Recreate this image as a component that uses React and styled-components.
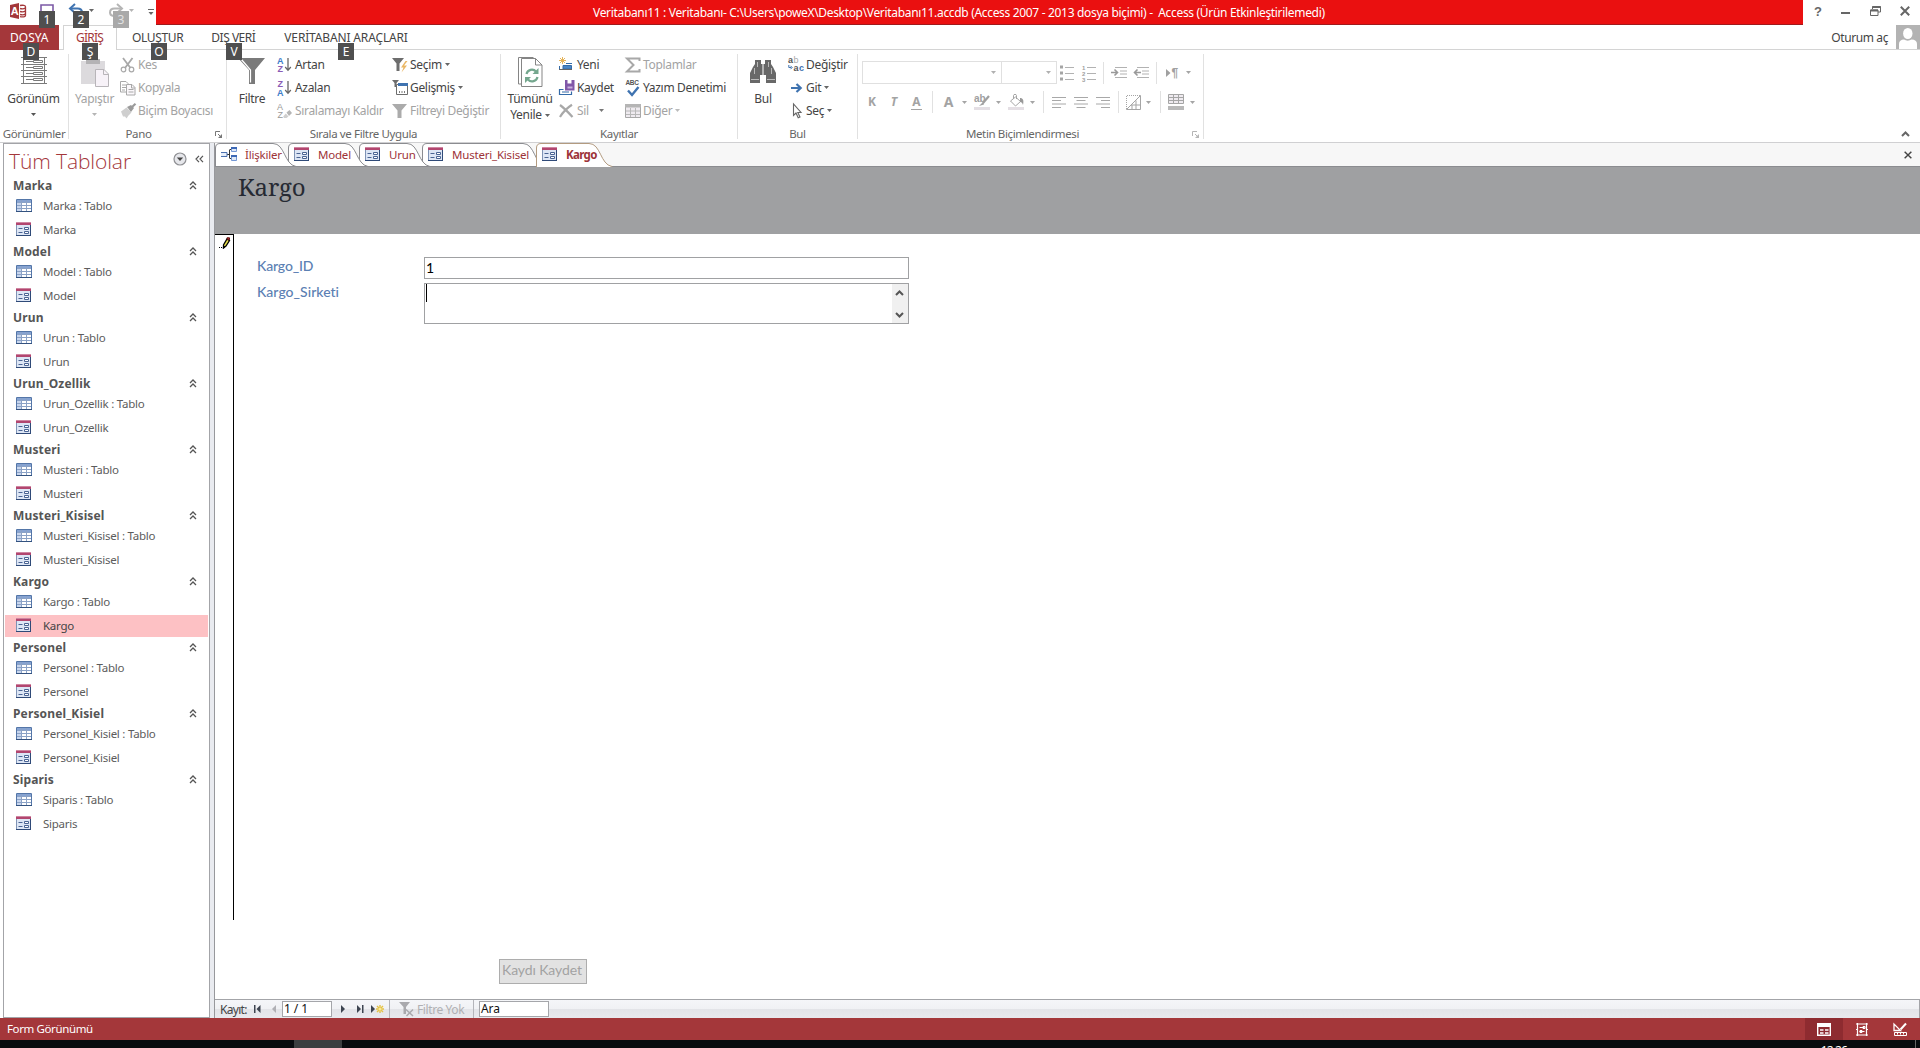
import React from "react";
import styled, { createGlobalStyle, css } from "styled-components";

const GlobalStyle = createGlobalStyle`
    * {
        box-sizing: border-box;
    }
    body {
        margin: 0;
        overflow: hidden;
        background: #fff;
        color: #444;
        font-family: "Noto Sans", "Open Sans", sans-serif;
        font-size: 12px;
    }
    svg {
        display: block;
        flex: none;
        overflow: visible;
    }
`;

const Window = styled.div`
    width: 1920px;
    height: 1048px;
    display: flex;
    flex-direction: column;
    overflow: hidden;
`;

/* ---------- title bar ---------- */

const TitleBar = styled.div`
    display: flex;
    height: 25px;
    flex: none;
`;

const QuickAccess = styled.div`
    position: relative;
    display: flex;
    align-items: flex-start;
    width: 156px;
    padding: 3px 0 0 10px;
`;

const QuickItem = styled.div`
    margin-left: ${({ $gap }) => $gap || 0}px;
    padding-top: ${({ $drop }) => $drop || 0}px;
`;

const Caption = styled.div`
    width: 1647px;
    padding-left: 437px;
    background: #ea1010;
    border-bottom: 1px solid #a01a1c;
    color: #fff;
    line-height: 25px;
    letter-spacing: -0.325px;
    white-space: pre;
`;

const WindowButtons = styled.div`
    display: flex;
    align-items: center;
    flex: 1;
    padding: 0 10px 3px 11px;
    justify-content: space-between;
`;

const KeyTip = styled.span`
    position: absolute;
    z-index: 5;
    left: ${({ $x }) => $x}px;
    top: ${({ $y }) => $y}px;
    width: 16px;
    height: 17px;
    background: ${({ $dim }) => ($dim ? "#a9a9a9" : "#4f4f4f")};
    color: ${({ $dim }) => ($dim ? "#e2e2e2" : "#fff")};
    line-height: 17px;
    text-align: center;
`;

/* ---------- ribbon tabs ---------- */

const TabBar = styled.div`
    position: relative;
    display: flex;
    flex: none;
    height: 25px;
    border-bottom: 1px solid #d4d4d4;
`;

const FileTab = styled.div`
    width: 59px;
    height: 25px;
    background: #a4373a;
    color: #fff;
    line-height: 26px;
    padding-left: 10px;
`;

const RibbonTab = styled.div`
    height: 25px;
    line-height: 26px;
    margin-left: ${({ $gap }) => $gap}px;
    letter-spacing: ${({ $ls }) => $ls}px;
    ${({ $active }) => $active && css`
        width: 54px;
        padding-left: 12px;
        background: #fff;
        border: 1px solid #d4d4d4;
        border-bottom: 0;
        line-height: 24px;
        color: #a4373a;
    `}
`;

const SignIn = styled.div`
    display: flex;
    margin-left: auto;
    line-height: 25px;
    gap: 8px;
    letter-spacing: -0.4px;
`;

/* ---------- ribbon ---------- */

const RibbonBox = styled.div`
    display: flex;
    flex: none;
    height: 93px;
    padding-top: 4px;
    border-bottom: 1px solid #d0d0d2;
`;

const Group = styled.div`
    position: relative;
    width: ${({ $w }) => $w}px;
    height: 85px;
    border-right: 1px solid #e1e1e1;
`;

const GroupBody = styled.div`
    display: flex;
    height: 70px;
    padding-left: ${({ $pad }) => $pad || 0}px;
`;

const GroupName = styled.div`
    color: #666;
    font-size: 11.5px;
    line-height: 20px;
    letter-spacing: -0.37px;
    text-align: center;
    padding-right: ${({ $shift }) => $shift || 0}px;
    white-space: nowrap;
`;

const Launcher = styled.div`
    position: absolute;
    right: 4px;
    bottom: 1px;
`;

const BigButtonBox = styled.div`
    display: flex;
    flex-direction: column;
    align-items: center;
    width: ${({ $w }) => $w}px;
    padding-top: 3px;
    color: ${({ $dim }) => ($dim ? "#a3a3a3" : "#444")};
    line-height: 16px;
    letter-spacing: -0.3px;
    white-space: nowrap;
`;

const BigIcon = styled.div`
    height: 34px;
`;

const BigArrow = styled.div`
    padding-top: 6px;
`;

const LabelRow = styled.div`
    display: flex;
    align-items: center;
    gap: 3px;
`;

const Column = styled.div`
    width: ${({ $w }) => $w}px;
    flex: none;
`;

const CommandBox = styled.div`
    display: flex;
    align-items: center;
    height: 23px;
    padding-bottom: 2px;
    color: ${({ $dim }) => ($dim ? "#a3a3a3" : "#444")};
    letter-spacing: -0.32px;
    white-space: nowrap;
`;

const CommandIcon = styled.div`
    width: 18px;
`;

const CommandArrow = styled.div`
    padding-left: ${({ $gap }) => $gap || 3}px;
`;

const FormatArea = styled.div`
    padding: 7px 0 0 4px;
`;

const FormatRow = styled.div`
    display: flex;
    align-items: center;
    height: ${({ $h }) => $h}px;
    margin-top: ${({ $top }) => $top || 0}px;
`;

const FontBox = styled.div`
    display: flex;
    align-items: center;
    justify-content: flex-end;
    width: ${({ $w }) => $w}px;
    height: 23px;
    margin-right: -1px;
    padding-right: 5px;
    border: 1px solid #e0e0e0;
`;

const Tool = styled.div`
    display: flex;
    justify-content: center;
    width: ${({ $w }) => $w}px;
    margin-left: ${({ $gap }) => $gap}px;
`;

const ToolLetter = styled(Tool)`
    color: #a3a3a3;
    font-weight: bold;
    line-height: 14px;
    font-size: ${({ $size }) => $size || 12}px;
    font-style: ${({ $italic }) => ($italic ? "italic" : "normal")};
    border-bottom: ${({ $under }) => ($under ? "1px solid #a3a3a3" : "0")};
`;

const ToolLine = styled.div`
    width: 1px;
    height: 22px;
    background: #e1e1e1;
    margin-left: ${({ $gap }) => $gap}px;
`;

const CollapseSpot = styled.div`
    margin: auto 10px 5px auto;
`;

/* ---------- navigation pane ---------- */

const Workspace = styled.div`
    display: flex;
    height: 875px;
    flex: none;
    padding-left: 3px;
`;

const NavPane = styled.div`
    width: 207px;
    height: 875px;
    border: 1px solid #a3a4a8;
    background: #fff;
`;

const NavHeader = styled.div`
    display: flex;
    align-items: center;
    height: 30px;
    padding: 0 5px 0 5px;
`;

const NavTitle = styled.div`
    width: 164px;
    padding-top: 4px;
    color: #a4373a;
    font-family: "Open Sans", "Noto Sans", sans-serif;
    font-size: 21px;
    font-weight: 300;
    line-height: 28px;
    letter-spacing: -0.1px;
    white-space: nowrap;
`;

const NavDouble = styled.div`
    margin-left: auto;
`;

const NavGroup = styled.div`
    height: 66px;
    padding-left: 1px;
`;

const NavGroupTitle = styled.div`
    display: flex;
    align-items: center;
    justify-content: space-between;
    height: 22px;
    margin-bottom: -1px;
    padding: 0 12px 0 8px;
    color: #555;
    font-size: 12px;
    font-weight: bold;
    letter-spacing: 0.15px;
`;

const NavItem = styled.div`
    display: flex;
    align-items: center;
    width: 203px;
    height: 22px;
    margin-bottom: 2px;
    padding: 0 0 2px 11px;
    background: ${({ $selected }) => ($selected ? "#fdc1c4" : "transparent")};
    color: ${({ $selected }) => ($selected ? "#444" : "#5c5c5c")};
    font-size: 11.5px;
    letter-spacing: -0.25px;
    white-space: pre;
`;

const NavItemIcon = styled.div`
    width: 27px;
`;

const Splitter = styled.div`
    width: 5px;
    background: #e9ebf0;
    border-right: 1px solid #97989c;
`;

/* ---------- documents ---------- */

const Documents = styled.div`
    display: flex;
    flex-direction: column;
    flex: 1;
`;

const DocTabs = styled.div`
    display: flex;
    height: 24px;
    flex: none;
    background: #f7f7f7;
    border-bottom: 1px solid #8b8c90;
`;

const DocTabBox = styled.div`
    position: relative;
    display: flex;
    align-items: center;
    width: ${({ $w }) => $w}px;
    height: 24px;
    flex: none;
    margin-right: -${({ $overlap }) => $overlap}px;
    padding: 0 0 2px 6px;
    z-index: ${({ $z }) => $z};
    color: #9d3338;
    font-size: 11.5px;
    font-weight: ${({ $active }) => ($active ? "bold" : "normal")};
    letter-spacing: ${({ $active }) => ($active ? "-0.65px" : "-0.2px")};
    white-space: nowrap;
`;

const DocTabIcon = styled.div`
    width: 24px;
`;

const TabShape = styled.svg`
    position: absolute;
    left: 0;
    top: 0;
    z-index: -1;
`;

const DocClose = styled.div`
    margin: 8px 8px 0 auto;
`;

const FormHeader = styled.div`
    height: 67px;
    flex: none;
    padding: 1px 0 0 23px;
    background: #9fa0a2;
    color: #262a33;
    font-family: "Noto Serif", "Liberation Serif", serif;
    font-size: 24px;
    line-height: 38px;
    letter-spacing: -0.2px;
`;

const FormBody = styled.div`
    display: flex;
    height: 686px;
    flex: none;
`;

const RecordSelector = styled.div`
    width: 19px;
    padding: 2px 0 0 4px;
    border-top: 1px solid #000;
    border-right: 1px solid #000;
`;

const Fields = styled.div`
    padding: 23px 0 0 23px;
`;

const Field = styled.div`
    display: flex;
    margin-bottom: 4px;
`;

const FieldLabel = styled.label`
    width: 167px;
    color: #5b80b3;
    font-family: "Lato", sans-serif;
    font-size: 14px;
    font-weight: 500;
    line-height: 17px;
    letter-spacing: ${({ $ls }) => $ls || 0}px;
`;

const FieldBox = styled.div`
    display: flex;
    width: 485px;
    height: ${({ $h }) => $h}px;
    padding-left: 1px;
    border: 1px solid #a0a1a3;
    color: #000;
    font-family: "Lato", sans-serif;
    font-size: 14px;
    line-height: 19px;
`;

const Caret = styled.div`
    width: 1px;
    height: 18px;
    background: #000;
`;

const ScrollTrack = styled.div`
    display: flex;
    flex-direction: column;
    align-items: center;
    justify-content: space-between;
    width: 16px;
    margin-left: auto;
    padding: 6px 2px 5px 0;
    background: #f0f0f0;
`;

const FormFooter = styled.div`
    height: 79px;
    flex: none;
    padding: 39px 0 0 284px;
`;

const SaveButton = styled.div`
    width: 88px;
    height: 25px;
    padding-left: 2px;
    background: #e2e2e2;
    border: 1px solid #adadad;
    color: #a2a2a2;
    font-family: "Lato", sans-serif;
    font-size: 14px;
    line-height: 20px;
    letter-spacing: -0.1px;
    white-space: nowrap;
`;

const RecordBar = styled.div`
    display: flex;
    align-items: center;
    height: 19px;
    border: 1px solid #a3a4a8;
    border-left: 0;
    border-bottom: 0;
    padding-left: 5px;
    background: linear-gradient(#f5f6f9, #f0f1f4 50%, #e3e4e8 50%, #e8e9ed);
    letter-spacing: -0.55px;
`;

const RecordPart = styled.div`
    width: ${({ $w }) => $w}px;
    color: ${({ $dim }) => ($dim ? "#b0b0b3" : "#444")};
    letter-spacing: ${({ $ls }) => $ls}px;
    white-space: nowrap;
`;

const RecordInput = styled.div`
    width: ${({ $w }) => $w}px;
    height: 16px;
    margin-right: ${({ $gap }) => $gap || 0}px;
    padding-left: 1px;
    background: #fff;
    border: 1px solid #a5a6aa;
    color: #111;
    line-height: 14px;
    letter-spacing: -0.1px;
`;

const RecordLine = styled.div`
    width: 1px;
    height: 18px;
    margin-right: ${({ $gap }) => $gap}px;
    background: #b4b5ba;
`;

/* ---------- bottom ---------- */

const StatusBar = styled.div`
    display: flex;
    justify-content: space-between;
    height: 22px;
    flex: none;
    padding-left: 7px;
    background: #a4373a;
    color: #fff;
    font-size: 11.5px;
    line-height: 22px;
    letter-spacing: -0.38px;
`;

const Views = styled.div`
    display: flex;
    width: 115px;
`;

const ViewButton = styled.div`
    display: flex;
    align-items: center;
    justify-content: center;
    width: 38px;
    background: ${({ $active }) => ($active ? "#8e2b30" : "transparent")};
`;

const TaskBar = styled.div`
    display: flex;
    height: 8px;
    flex: none;
    padding-left: 294px;
    overflow: hidden;
    background: #080b0e;
`;

const TaskButton = styled.div`
    width: 48px;
    background: #3b3e40;
`;

const Clock = styled.div`
    margin-left: auto;
    padding: 3px 68px 0 0;
    color: #fff;
    line-height: 16px;
    letter-spacing: -0.9px;
`;

const DesktopEdge = styled.div`
    width: 1px;
    margin-right: 4px;
    background: #666;
`;

/* ---------- icons ---------- */

const Svg = ({ w = 16, h = 16, children, ...rest }) => (
    <svg width={w} height={h} viewBox={`0 0 ${w} ${h}`} fill="none" {...rest}>{children}</svg>
);

const IconText = styled.text`
    font-family: "Liberation Sans", sans-serif;
    font-size: ${({ $size }) => $size}px;
    font-weight: ${({ $bold }) => ($bold ? "bold" : "normal")};
    fill: ${({ $c }) => $c};
`;

const Arrow = ({ color = "#666" }) => (
    <Svg w={5} h={3}><path d="M0 0h5L2.5 3z" fill={color} /></Svg>
);

const AccessLogo = () => (
    <Svg>
        <path d="M0 2l9-2v16l-9-2z" fill="#a4373a" />
        <IconText x="0.8" y="11.8" $size={11} $bold $c="#fff">A</IconText>
        <path d="M10 2.5c3-.6 5.500 0 5.500 1.200v8.800c0 1.200-2.500 1.800-5.500 1.200M10 5.500c2 .5 4.500.2 5.500-.8M10 8.500c2 .5 4.500.2 5.500-.8M10 11.500c2 .5 4.500.2 5.500-.8" stroke="#a4373a" strokeWidth="1.300" />
    </Svg>
);

const SaveIcon = () => (
    <Svg w={14} h={14}>
        <path d="M1 1h12v12H1z" stroke="#7c5aa6" strokeWidth="1.600" />
        <path d="M3.500 8h7v5h-7z" fill="#7c5aa6" />
    </Svg>
);

const UndoIcon = ({ color, flip }) => (
    <Svg w={14} h={13} transform={flip ? "scale(-1 1)" : undefined}>
        <path d="M2 4.500h6.500c3 0 4.500 1.800 4.500 4 0 1.700-1 3-3 3.500" stroke={color} strokeWidth="2" />
        <path d="M6 0L1 4.500 6 9" stroke={color} strokeWidth="2" />
    </Svg>
);

const CustomizeIcon = () => (
    <Svg w={6} h={6}><path d="M0 .5h6" stroke="#666" /><path d="M.5 3h5L3 6z" fill="#666" /></Svg>
);

const HelpIcon = () => (
    <Svg w={8} h={10}><IconText x="0" y="10" $size={13} $bold $c="#666">?</IconText></Svg>
);
const MinimizeIcon = () => (
    <Svg w={9} h={10}><path d="M0 7h9" stroke="#666" strokeWidth="2" /></Svg>
);
const RestoreIcon = () => (
    <Svg w={11} h={10}>
        <path d="M2.500 3V.5h8v5.500H8" stroke="#666" /><path d="M2.500 1h8" stroke="#666" strokeWidth="2" />
        <path d="M.5 4h7.500v5.500H.5z" stroke="#666" /><path d="M.5 4.500h7.500" stroke="#666" strokeWidth="2" />
    </Svg>
);
const CloseIcon = ({ size = 10, color = "#666", width = 2 }) => (
    <svg width={size} height={size} viewBox="0 0 10 10"><path d="M.8.8l8.400 8.400M9.200.8L.8 9.200" stroke={color} strokeWidth={width} /></svg>
);

const Avatar = () => (
    <Svg w={24} h={24}>
        <path d="M0 0h24v24H0z" fill="#b3b3b3" />
        <path d="M3 24v-5c0-3 2-4.500 5-4.500 2 1.500 5.500 1.500 7.500 0 3.500 0 5.500 1.500 5.500 4.500v5z" fill="#fff" />
        <ellipse cx="11.800" cy="8.500" rx="4.700" ry="5.500" fill="#fff" />
    </Svg>
);

const ViewIcon = () => (
    <Svg w={26} h={27}>
        <path d="M2.500 0v27M23.500 0v27M0 .5h26M0 7.500h26M0 13.500h26M0 19.500h26M0 26.500h26" stroke="#7a7a7a" />
        <path d="M5 4.500h7M5 10.500h7M5 16.500h7M5 22.500h7" stroke="#7a7a7a" />
        <path d="M12.500 3.500h9v2h-9zM12.500 9.500h9v2h-9zM12.500 15.500h9v2h-9zM12.500 21.500h9v2h-9z" stroke="#7a7a7a" />
    </Svg>
);

const PasteIcon = () => (
    <Svg w={28} h={30}>
        <path d="M0 4h24v23H0z" fill="#dcdadd" />
        <path d="M5 2h3c0-2 7-2 7 0h4v5H5z" fill="#b4b3b5" />
        <path d="M14.500 12.500h8.500l4.500 4.500v12.500h-13z" fill="#f7f2f8" stroke="#b8b5b9" />
        <path d="M22.500 12.500v5h5" stroke="#b8b5b9" />
    </Svg>
);

const CutIcon = () => (
    <Svg>
        <path d="M3 1l7.500 10M12.500 1L5 11" stroke="#a8a8a8" strokeWidth="1.800" />
        <circle cx="3.500" cy="12.500" r="2.300" stroke="#a8a8a8" strokeWidth="1.200" />
        <circle cx="11.500" cy="12.500" r="2.300" stroke="#a8a8a8" strokeWidth="1.200" />
    </Svg>
);
const CopyIcon = () => (
    <Svg>
        <path d="M.5 1.500h5.500l2 2v8.500H.5zM2 5h4M2 7.500h4M2 10h3" stroke="#a8a8a8" />
        <path d="M6.500 4.500h5.500l3 3v7.500H6.500z" fill="#fbf8fb" stroke="#a8a8a8" />
        <path d="M11.500 4.500v3.500h3.500M8.500 9.500h5M8.500 12h5" stroke="#a8a8a8" />
    </Svg>
);
const BrushIcon = () => (
    <Svg>
        <path d="M1 8.500l5.500-4 5 5-3 3-2 3-1.500-2-2 0z" fill="#cfcfcf" />
        <path d="M7 4l4-2 3 3-3 4z" fill="#9b9b9b" />
        <path d="M11.500 4.500L15.500.8" stroke="#9b9b9b" strokeWidth="2.200" />
    </Svg>
);

const FilterBigIcon = () => (
    <Svg w={28} h={28}>
        <path d="M0 1h27L17 13v14h-6V13z" fill="#7a7a7a" />
        <path d="M3.500 2.500l9 10.500v12.500" stroke="#fff" strokeWidth="1.200" />
    </Svg>
);

const SortIcon = ({ up }) => (
    <Svg w={15} h={17}>
        <IconText x="0" y={up ? 7.5 : 16.5} $size={9} $bold $c="#3d7cc9">A</IconText>
        <IconText x="0.4" y={up ? 16 : 7.5} $size={9} $bold $c="#8a5bb5">Z</IconText>
        <path d="M11 2v12M8.200 11l2.800 3.300L13.800 11" stroke="#666" strokeWidth="1.300" />
    </Svg>
);
const ClearSortIcon = () => (
    <Svg w={15} h={17}>
        <IconText x="0" y="7.5" $size={9} $c="#999">A</IconText>
        <IconText x="0.4" y="16" $size={9} $c="#999">Z</IconText>
        <path d="M9.500 10.500l3-2.500 2.500 3-3 3z" fill="#b5b5b5" /><path d="M8.800 11.500l2.700 3-2 1.500H7l-.8-1.500z" fill="#cfcfcf" />
    </Svg>
);
const SelectionIcon = () => (
    <Svg>
        <path d="M0 1h12L7.500 6.500V14h-3V6.500z" fill="#6d6d6d" />
        <path d="M13.500 4L9 10.500h2.500L9.500 15.500l5.500-7h-3L15.500 4z" fill="#eab765" />
    </Svg>
);
const AdvancedIcon = () => (
    <Svg>
        <path d="M0 0h7L4.500 3v4h-2V3z" fill="#6d6d6d" />
        <path d="M4.500 4.500h11v10h-11z" fill="#fff" stroke="#6d6d6d" /><path d="M6 3h10v3H6z" fill="#3f73b0" />
        <path d="M7 12h1M9.500 12h1M12 12h1" stroke="#555" strokeWidth="1.500" />
    </Svg>
);
const ToggleFilterIcon = () => (
    <Svg><path d="M0 1h15L9.500 7.500V15h-4V7.500z" fill="#ababab" /></Svg>
);

const RefreshBigIcon = () => (
    <Svg w={25} h={31}>
        <path d="M3.500 27H.5V.5h15" stroke="#858585" />
        <path d="M3.500 1.500h14l6.500 6.500v21.500H3.500z" fill="#fff" stroke="#858585" />
        <path d="M17.500 1.500V8h6.500" stroke="#858585" />
        <path d="M8.500 17a5.500 5.500 0 0 1 9.500-2.500M19.500 20a5.500 5.500 0 0 1-9.500 2.500" stroke="#74a78e" strokeWidth="2.200" />
        <path d="M20.500 11v6h-6zM7 26v-6h6z" fill="#74a78e" />
    </Svg>
);
const NewIcon = () => (
    <Svg w={15} h={15}>
        <path d="M3.500 0v7M0 3.500h7M1 1l5 5M6 1L1 6" stroke="#e6b45a" />
        <path d="M4 8.500h8.500v3.500H4z" fill="#4a86c6" stroke="#346ba8" /><path d="M.5 9v3.500h2M7 6.500h6" stroke="#346ba8" />
        <path d="M0 12.500h13" stroke="#666" />
    </Svg>
);
const SaveRecordIcon = () => (
    <Svg>
        <path d="M6 0h9.500v10.500H6z" fill="#8057a8" /><path d="M8.500 0h4v3.500h-4z" fill="#fff" /><path d="M8.500 6.500h5v2h-5z" fill="#c7b2dc" />
        <path d="M.5 9.500h4M.5 9v5.500h12v-3M3 12h7" stroke="#346ba8" strokeWidth="1.200" />
    </Svg>
);
const DeleteIcon = () => (
    <Svg w={15} h={14}><path d="M1 1c4 3 8 7 12.500 12M13 .8C8 4 4 8 1 13" stroke="#a8a8a8" strokeWidth="2.200" /></Svg>
);
const SumIcon = () => (
    <Svg><path d="M14.500 4V1.500H2L8.500 8 2 14.500h12.500V12" stroke="#a8a8a8" strokeWidth="2" /></Svg>
);
const SpellIcon = () => (
    <Svg w={16} h={18}>
        <IconText x="0.5" y="6" $size={6.5} $bold $c="#555">ABC</IconText>
        <path d="M3 11.500l4 4.500 6.500-8" stroke="#3f73b0" strokeWidth="2.400" />
    </Svg>
);
const MoreIcon = () => (
    <Svg w={16} h={15}>
        <path d="M.5 2.500h15v12H.5z" fill="#efebf0" stroke="#a8a8a8" /><path d="M0 1h16v3.500H0z" fill="#b5b5b5" />
        <path d="M1 8h14M1 11.500h14M5.500 5v9M10.500 5v9" stroke="#b8b8b8" />
    </Svg>
);

const BinocularsIcon = () => (
    <Svg w={26} h={27}>
        <path d="M5 3h6v4h4V3h6v4l2 3 3 6v10H16v-8h-6v8H0V16l3-6 2-3z" fill="#686868" />
        <path d="M4.500 11v6M7.500 5v5M21.500 11v6M18.500 5v5M1 22.500h8M17 22.500h8" stroke="#b9b9b9" />
        <path d="M13 7v11" stroke="#fff" strokeWidth="1" />
    </Svg>
);
const ReplaceIcon = () => (
    <Svg w={17} h={17}>
        <IconText x="0" y="7" $size={9} $bold $c="#555">a</IconText>
        <IconText x="5.6" y="7" $size={9} $c="#aaa">b</IconText>
        <IconText x="5.6" y="15" $size={9} $bold $c="#555">a</IconText>
        <IconText x="11" y="15" $size={9} $bold $c="#3f73b0">c</IconText>
        <path d="M.8 9v2.500h2.500M2.500 9.800L4.200 11.500 2.500 13.200" stroke="#3f73b0" />
    </Svg>
);
const GoIcon = () => (
    <Svg w={16} h={10}><path d="M3 5h9M8.500 1l4.200 4-4.200 4" stroke="#3f73b0" strokeWidth="2.200" /></Svg>
);
const CursorIcon = () => (
    <Svg w={16} h={16}><path d="M5.500 1v11.500L8 10l2.200 4.800 1.800-.8-2.200-4.500H13z" fill="#fff" stroke="#666" strokeWidth="1.100" /></Svg>
);

const LauncherIcon = ({ color = "#777" }) => (
    <Svg w={7} h={7}><path d="M.5 5V.5H5M3 3l3 3" stroke={color} /><path d="M7 3v4H3z" fill={color} /></Svg>
);

const BulletsIcon = () => (
    <Svg w={14} h={16}>
        <path d="M0 2h3M0 8h3M0 14h3" stroke="#a5a5a5" strokeWidth="3" />
        <path d="M5 2.500h9M5 8.500h9M5 14.500h9" stroke="#b2b2b2" />
    </Svg>
);
const NumbersIcon = () => (
    <Svg w={14} h={16}>
        <IconText x="0" y="4.5" $size={6} $bold $c="#a0a0a0">1</IconText>
        <IconText x="0" y="10.5" $size={6} $bold $c="#a0a0a0">2</IconText>
        <IconText x="0" y="16.5" $size={6} $bold $c="#a0a0a0">3</IconText>
        <path d="M5 2.500h9M5 8.500h9M5 14.500h9" stroke="#b2b2b2" />
    </Svg>
);
const IndentIcon = ({ back }) => (
    <Svg w={16} h={11}>
        <path d="M4 .5h12M9 4h7M9 7h7M4 10.500h12" stroke="#b2b2b2" />
        <path d={back ? "M8 5.500H2M4.500 2.500l-3 3 3 3" : "M0 5.500h6M3.500 2.500l3 3-3 3"} stroke="#999" strokeWidth="1.600" />
    </Svg>
);
const ParagraphIcon = () => (
    <Svg w={13} h={10}>
        <path d="M0 1l4.500 4L0 9z" fill="#a0a0a0" />
        <IconText x="5.5" y="9" $size={12} $bold $c="#a0a0a0">¶</IconText>
    </Svg>
);
const HighlightIcon = () => (
    <Svg w={16} h={16}>
        <path d="M0 13h16v3H0z" fill="#e4dfe4" />
        <IconText x="0" y="8" $size={10} $bold $c="#a0a0a0">ab</IconText>
        <path d="M15 2l-6 7" stroke="#a0a0a0" strokeWidth="2.200" /><path d="M9.500 7.500L5 12l5-1.500z" fill="#a0a0a0" />
    </Svg>
);
const FillIcon = () => (
    <Svg w={16} h={16}>
        <path d="M0 13h16v3H0z" fill="#e4dfe4" />
        <path d="M2.500 7l5-4 5 4.500-5 4.500zM5.500 5V1.500c0-1.500 3-1.500 3 0V5" stroke="#a5a5a5" /><path d="M12 4c3 0 4 2 3 7-.5-2-1.500-3-3-3z" fill="#999" />
    </Svg>
);
const AlignIcon = ({ d }) => (
    <Svg w={14} h={11}><path d={d} stroke="#a8a8a8" /></Svg>
);
const BordersIcon = () => (
    <Svg w={15} h={15}>
        <path d="M.5 14V.5H14" stroke="#a5a5a5" strokeDasharray="1 1" />
        <path d="M.5 14.500h14V.5zM5 10h9.500M10 5.500v9M6 10v4.500" stroke="#a5a5a5" />
    </Svg>
);
const RowColorIcon = () => (
    <Svg w={16} h={16}>
        <path d="M.5.500h15v9H.5z" fill="#efebf0" stroke="#a5a5a5" /><path d="M1 3.500h15M1 6.500h15M5.500 1v9M10.500 1v9" stroke="#a5a5a5" />
        <path d="M0 12h16v4H0z" fill="#b9b9b9" />
    </Svg>
);
const ChevronIcon = ({ down, color = "#555" }) => (
    <Svg w={9} h={6}><path d={down ? "M1 1l3.500 3.500L8 1" : "M1 5l3.500-3.500L8 5"} stroke={color} strokeWidth="2" /></Svg>
);

const TableIcon = () => (
    <Svg w={16} h={13}>
        <path d="M.5.500h15v12H.5z" fill="#fff" stroke="#5476a8" />
        <path d="M1 1h14v2H1z" fill="#86a3d2" /><path d="M1 3h4v9H1z" fill="#c8d6ee" />
        <path d="M1 3.500h14M1 6.500h14M1 9.500h14M5.500 1v11M10.500 1v11" stroke="#8ba2c6" />
        <path d="M0 12.500h16" stroke="#33527f" />
    </Svg>
);
const FormIcon = () => (
    <Svg w={15} h={14}>
        <path d="M.5.500h14v13H.5z" fill="#dde6f5" stroke="#7f93b5" />
        <path d="M0 0h15v3H0z" fill="#b2466f" /><path d="M0 .5h15" stroke="#cf86a2" />
        <path d="M2.500 6.500h4M2.500 10.500h4" stroke="#4a6493" /><path d="M8.500 5.500h4v2h-4zM8.500 9.500h4v2h-4z" fill="#fff" stroke="#4a6493" />
        <path d="M0 13.500h15M14.500 3v11" stroke="#2f4a78" />
    </Svg>
);
const RelationsIcon = () => (
    <Svg w={16} h={14}>
        <path d="M6 7.500h3M8.500 3v8M8.500 2.500h2M8.500 11.500h2" stroke="#333" />
        <path d="M0 5.500h6v4H0" fill="#e6eefa" stroke="#4a6fae" />
        <path d="M10.500.5h5v4h-5zM10.500 8.500h5v5h-5z" fill="#dfe9f8" stroke="#7397d4" /><path d="M10 1h6M10 9h6" stroke="#3c68b5" strokeWidth="2" />
    </Svg>
);
const GroupChevron = () => (
    <Svg w={8} h={9}><path d="M1 4l3-3 3 3M1 8l3-3 3 3" stroke="#555" strokeWidth="1.300" /></Svg>
);
const CollapseIcon = () => (
    <Svg w={9} h={8}><path d="M4 .8L1 4l3 3.200M8 .8L5 4l3 3.200" stroke="#555" strokeWidth="1.200" /></Svg>
);
const MenuIcon = () => (
    <Svg w={14} h={14}>
        <circle cx="7" cy="7" r="6" fill="#e6e7eb" stroke="#8f9094" strokeWidth="1.200" /><path d="M3.800 5.500h6.400L7 9z" fill="#444" />
    </Svg>
);
const PencilIcon = () => (
    <Svg w={12} h={12}>
        <path d="M0 10.500h1M2 10.500h1" stroke="#000" />
        <path d="M4.500 10.500V8l3.500-6 2.500 1.500L7 9z" fill="#e8e14a" stroke="#000" strokeWidth="1.300" />
        <path d="M8 .8h2.500v2H8.500z" fill="#c33" stroke="#5a1010" /><path d="M4 11.500l2-2" stroke="#000" strokeWidth="1.500" />
    </Svg>
);

const NavIcon = ({ d, dim, w = 7 }) => (
    <Svg w={w} h={8}><path d={d} fill={dim ? "#b0b0b5" : "#3d4450"} /></Svg>
);
const NewRecordIcon = () => (
    <Svg w={13} h={8}>
        <path d="M0 0l4 4-4 4z" fill="#3d4450" />
        <path d="M9 0v8M5 4h8M6 1l6 6M12 1L6 7" stroke="#e5c243" strokeWidth="1.400" /><circle cx="9" cy="4" r="1.600" fill="#f8ea9a" />
    </Svg>
);
const NoFilterIcon = () => (
    <Svg w={15} h={15}>
        <path d="M0 0h11L7 5v7H4.500V5z" fill="#a9a9ad" /><path d="M7 7.500l7 6.500M14 7.500L7.500 14" stroke="#a9a9ad" strokeWidth="1.500" />
    </Svg>
);

const FormViewIcon = () => (
    <Svg w={14} h={13}>
        <path d="M.7.700h12.600v11.600H.7z" stroke="#fff" strokeWidth="1.400" /><path d="M0 0h14v4H0z" fill="#fff" />
        <path d="M3 7h3.500M3 10h3.500M8 7h3.500M8 10h3.500" stroke="#fff" strokeWidth="1.500" />
    </Svg>
);
const LayoutViewIcon = () => (
    <Svg w={12} h={13}>
        <path d="M1.500 0v13M10.500 0v13M0 1h12M0 12h12M0 6.500h2M10 6.500h2" stroke="#fff" strokeWidth="1.200" />
        <path d="M3.500 4.500h5M3.500 8.500h5M7 3.500h2v2H7zM4 7.500h2v2H4z" stroke="#fff" />
    </Svg>
);
const DesignViewIcon = () => (
    <Svg w={14} h={13}>
        <path d="M1 1v6.500h6.500z" stroke="#fff" strokeWidth="1.300" /><path d="M13 .5L7.500 6.500" stroke="#fff" strokeWidth="2" />
        <path d="M1.500 9.500h12v3h-12zM4.500 10v1.500M7.500 10v1.500M10.500 10v1.500" stroke="#fff" />
    </Svg>
);

/* ---------- parts ---------- */

const BigButton = ({ w, icon, lines, dim, arrow, inlineArrow }) => (
    <BigButtonBox $w={w} $dim={dim}>
        <BigIcon>{icon}</BigIcon>
        {lines.map((line, i) => (
            <LabelRow key={line}>
                {line}
                {inlineArrow && i === lines.length - 1 && <Arrow />}
            </LabelRow>
        ))}
        {arrow && <BigArrow><Arrow color={dim ? "#b5b5b5" : "#555"} /></BigArrow>}
    </BigButtonBox>
);

const Command = ({ icon, label, dim, arrow, gap, arrowColor }) => (
    <CommandBox $dim={dim}>
        <CommandIcon>{icon}</CommandIcon>
        {label}
        {arrow && <CommandArrow $gap={gap}><Arrow color={arrowColor} /></CommandArrow>}
    </CommandBox>
);

const DocTab = ({ w, overlap, z, icon, label, active }) => (
    <DocTabBox $w={w} $overlap={overlap} $z={z} $active={active}>
        <TabShape width={w} height="24">
            <path
                d={`M.5 24V5Q.5.500 5 .5H${w - 24}C${w - 12} .5 ${w - 13} 21.500 ${w - 1} 23.500V24`}
                fill="#fff"
                stroke={active ? "#b39b80" : "#8b8c90"}
            />
            {!active && <path d={`M0 23.500h${w}`} stroke="#8b8c90" />}
        </TabShape>
        <DocTabIcon>{icon}</DocTabIcon>
        {label}
    </DocTabBox>
);

const navGroups = ["Marka", "Model", "Urun", "Urun_Ozellik", "Musteri", "Musteri_Kisisel", "Kargo", "Personel", "Personel_Kisiel", "Siparis"];

const Ribbon = () => (
    <RibbonBox>
        <Group $w={69}>
            <GroupBody $pad={3}>
                <BigButton w={61} icon={<ViewIcon />} lines={["Görünüm"]} arrow />
            </GroupBody>
            <GroupName>Görünümler</GroupName>
        </Group>
        <Group $w={158}>
            <GroupBody>
                <BigButton w={51} icon={<PasteIcon />} lines={["Yapıştır"]} dim arrow />
                <Column $w={100}>
                    <Command icon={<CutIcon />} label="Kes" dim />
                    <Command icon={<CopyIcon />} label="Kopyala" dim />
                    <Command icon={<BrushIcon />} label="Biçim Boyacısı" dim />
                </Column>
            </GroupBody>
            <GroupName $shift={18}>Pano</GroupName>
            <Launcher><LauncherIcon /></Launcher>
        </Group>
        <Group $w={274}>
            <GroupBody>
                <BigButton w={50} icon={<FilterBigIcon />} lines={["Filtre"]} />
                <Column $w={115}>
                    <Command icon={<SortIcon up />} label="Artan" />
                    <Command icon={<SortIcon />} label="Azalan" />
                    <Command icon={<ClearSortIcon />} label="Sıralamayı Kaldır" dim />
                </Column>
                <Column $w={100}>
                    <Command icon={<SelectionIcon />} label="Seçim" arrow />
                    <Command icon={<AdvancedIcon />} label="Gelişmiş" arrow />
                    <Command icon={<ToggleFilterIcon />} label="Filtreyi Değiştir" dim />
                </Column>
            </GroupBody>
            <GroupName>Sırala ve Filtre Uygula</GroupName>
        </Group>
        <Group $w={237}>
            <GroupBody>
                <BigButton w={58} icon={<RefreshBigIcon />} lines={["Tümünü", "Yenile"]} inlineArrow />
                <Column $w={66}>
                    <Command icon={<NewIcon />} label="Yeni" />
                    <Command icon={<SaveRecordIcon />} label="Kaydet" />
                    <Command icon={<DeleteIcon />} label="Sil" dim arrow gap={10} arrowColor="#777" />
                </Column>
                <Column $w={105}>
                    <Command icon={<SumIcon />} label="Toplamlar" dim />
                    <Command icon={<SpellIcon />} label="Yazım Denetimi" />
                    <Command icon={<MoreIcon />} label="Diğer" dim arrow arrowColor="#bbb" />
                </Column>
            </GroupBody>
            <GroupName>Kayıtlar</GroupName>
        </Group>
        <Group $w={120}>
            <GroupBody>
                <BigButton w={50} icon={<BinocularsIcon />} lines={["Bul"]} />
                <Column $w={65}>
                    <Command icon={<ReplaceIcon />} label="Değiştir" />
                    <Command icon={<GoIcon />} label="Git" arrow />
                    <Command icon={<CursorIcon />} label="Seç" arrow />
                </Column>
            </GroupBody>
            <GroupName>Bul</GroupName>
        </Group>
        <Group $w={346}>
            <GroupBody>
                <FormatArea>
                    <FormatRow $h={23}>
                        <FontBox $w={140}><Arrow color="#b0b0b0" /></FontBox>
                        <FontBox $w={56}><Arrow color="#b0b0b0" /></FontBox>
                        <Tool $w={14} $gap={4}><BulletsIcon /></Tool>
                        <Tool $w={14} $gap={8}><NumbersIcon /></Tool>
                        <ToolLine $gap={7} />
                        <Tool $w={16} $gap={7}><IndentIcon /></Tool>
                        <Tool $w={16} $gap={6}><IndentIcon back /></Tool>
                        <ToolLine $gap={7} />
                        <Tool $w={13} $gap={9}><ParagraphIcon /></Tool>
                        <Tool $w={5} $gap={7}><Arrow color="#a5a5a5" /></Tool>
                    </FormatRow>
                    <FormatRow $h={22} $top={7}>
                        <ToolLetter $w={10} $gap={5}>K</ToolLetter>
                        <ToolLetter $w={10} $gap={12} $italic>T</ToolLetter>
                        <ToolLetter $w={11} $gap={12} $under>A</ToolLetter>
                        <ToolLine $gap={10} />
                        <ToolLetter $w={11} $gap={10} $size={14}>A</ToolLetter>
                        <Tool $w={5} $gap={8}><Arrow color="#a5a5a5" /></Tool>
                        <Tool $w={16} $gap={7}><HighlightIcon /></Tool>
                        <Tool $w={5} $gap={6}><Arrow color="#a5a5a5" /></Tool>
                        <Tool $w={16} $gap={7}><FillIcon /></Tool>
                        <Tool $w={5} $gap={6}><Arrow color="#a5a5a5" /></Tool>
                        <ToolLine $gap={8} />
                        <Tool $w={14} $gap={8}><AlignIcon d="M0 .5h14M0 3.500h9M0 7h14M0 10.500h9" /></Tool>
                        <Tool $w={14} $gap={8}><AlignIcon d="M0 .5h14M2.500 3.500h9M0 7h14M2.500 10.500h9" /></Tool>
                        <Tool $w={14} $gap={8}><AlignIcon d="M0 .5h14M5 3.500h9M0 7h14M5 10.500h9" /></Tool>
                        <ToolLine $gap={8} />
                        <Tool $w={15} $gap={7}><BordersIcon /></Tool>
                        <Tool $w={5} $gap={5}><Arrow color="#a5a5a5" /></Tool>
                        <ToolLine $gap={9} />
                        <Tool $w={16} $gap={7}><RowColorIcon /></Tool>
                        <Tool $w={5} $gap={6}><Arrow color="#a5a5a5" /></Tool>
                    </FormatRow>
                </FormatArea>
            </GroupBody>
            <GroupName $shift={16}>Metin Biçimlendirmesi</GroupName>
            <Launcher><LauncherIcon color="#b5b5b5" /></Launcher>
        </Group>
        <CollapseSpot><ChevronIcon color="#666" /></CollapseSpot>
    </RibbonBox>
);

const App = () => {
    return (
        <>
            <GlobalStyle />
            <Window>
                <TitleBar>
                    <QuickAccess>
                        <AccessLogo />
                        <QuickItem $gap={14} $drop={1}><SaveIcon /></QuickItem>
                        <QuickItem $gap={15} $drop={1}><UndoIcon color="#3f73b0" /></QuickItem>
                        <QuickItem $gap={6} $drop={6}><Arrow /></QuickItem>
                        <QuickItem $gap={15} $drop={1}><UndoIcon color="#b5b5b5" flip /></QuickItem>
                        <QuickItem $gap={6} $drop={6}><Arrow color="#b5b5b5" /></QuickItem>
                        <QuickItem $gap={14} $drop={6}><CustomizeIcon /></QuickItem>
                        <KeyTip $x={39} $y={11}>1</KeyTip>
                        <KeyTip $x={73} $y={11}>2</KeyTip>
                        <KeyTip $x={113} $y={11} $dim>3</KeyTip>
                    </QuickAccess>
                    <Caption>{"Veritabanı11 : Veritabanı- C:\\Users\\poweX\\Desktop\\Veritabanı11.accdb (Access 2007 - 2013 dosya biçimi) -  Access (Ürün Etkinleştirilemedi)"}</Caption>
                    <WindowButtons>
                        <HelpIcon />
                        <MinimizeIcon />
                        <RestoreIcon />
                        <CloseIcon />
                    </WindowButtons>
                </TitleBar>
                <TabBar>
                    <FileTab>DOSYA</FileTab>
                    <RibbonTab $gap={4} $ls={-0.75} $active>GİRİŞ</RibbonTab>
                    <RibbonTab $gap={15} $ls={-0.35}>OLUŞTUR</RibbonTab>
                    <RibbonTab $gap={28} $ls={-0.5}>DIŞ VERİ</RibbonTab>
                    <RibbonTab $gap={29} $ls={-0.15}>VERİTABANI ARAÇLARI</RibbonTab>
                    <SignIn>Oturum aç<Avatar /></SignIn>
                    <KeyTip $x={23} $y={18}>D</KeyTip>
                    <KeyTip $x={82} $y={18}>Ş</KeyTip>
                    <KeyTip $x={151} $y={18}>O</KeyTip>
                    <KeyTip $x={226} $y={18}>V</KeyTip>
                    <KeyTip $x={338} $y={18}>E</KeyTip>
                </TabBar>
                <Ribbon />
                <Workspace>
                    <NavPane>
                        <NavHeader>
                            <NavTitle>Tüm Tablolar</NavTitle>
                            <MenuIcon />
                            <NavDouble><CollapseIcon /></NavDouble>
                        </NavHeader>
                        {navGroups.map(name => (
                            <NavGroup key={name}>
                                <NavGroupTitle>{name}<GroupChevron /></NavGroupTitle>
                                <NavItem><NavItemIcon><TableIcon /></NavItemIcon>{name} : Tablo</NavItem>
                                <NavItem $selected={name === "Kargo"}><NavItemIcon><FormIcon /></NavItemIcon>{name}</NavItem>
                            </NavGroup>
                        ))}
                    </NavPane>
                    <Splitter />
                    <Documents>
                        <DocTabs>
                            <DocTab w={82} overlap={9} z={4} icon={<RelationsIcon />} label="İlişkiler" />
                            <DocTab w={81} overlap={10} z={3} icon={<FormIcon />} label="Model" />
                            <DocTab w={72} overlap={9} z={2} icon={<FormIcon />} label="Urun" />
                            <DocTab w={125} overlap={11} z={1} icon={<FormIcon />} label="Musteri_Kisisel" />
                            <DocTab w={77} overlap={0} z={5} icon={<FormIcon />} label="Kargo" active />
                            <DocClose><CloseIcon size={8} color="#444" width={1.8} /></DocClose>
                        </DocTabs>
                        <FormHeader>Kargo</FormHeader>
                        <FormBody>
                            <RecordSelector><PencilIcon /></RecordSelector>
                            <Fields>
                                <Field>
                                    <FieldLabel $ls={-0.15}>Kargo_ID</FieldLabel>
                                    <FieldBox $h={22}>1</FieldBox>
                                </Field>
                                <Field>
                                    <FieldLabel $ls={0.03}>Kargo_Sirketi</FieldLabel>
                                    <FieldBox $h={41}>
                                        <Caret />
                                        <ScrollTrack>
                                            <ChevronIcon />
                                            <ChevronIcon down />
                                        </ScrollTrack>
                                    </FieldBox>
                                </Field>
                            </Fields>
                        </FormBody>
                        <FormFooter>
                            <SaveButton>Kaydı Kaydet</SaveButton>
                        </FormFooter>
                        <RecordBar>
                            <RecordPart $w={34} $ls={-0.7}>Kayıt:</RecordPart>
                            <RecordPart $w={18}><NavIcon d="M0 0h1.500v8H0zM6.500 0v8L2.500 4z" /></RecordPart>
                            <RecordPart $w={10}><NavIcon d="M4 0v8L0 4z" dim /></RecordPart>
                            <RecordInput $w={50} $gap={9}>1 / 1</RecordInput>
                            <RecordPart $w={16}><NavIcon d="M0 0l4 4-4 4z" /></RecordPart>
                            <RecordPart $w={14}><NavIcon d="M0 0l4 4-4 4zM5 0h1.500v8H5z" /></RecordPart>
                            <RecordPart $w={18}><NewRecordIcon /></RecordPart>
                            <RecordLine $gap={9} />
                            <RecordPart $w={18}><NoFilterIcon /></RecordPart>
                            <RecordPart $w={56} $ls={-0.4} $dim>Filtre Yok</RecordPart>
                            <RecordLine $gap={5} />
                            <RecordInput $w={70}>Ara</RecordInput>
                        </RecordBar>
                    </Documents>
                </Workspace>
                <StatusBar>
                    Form Görünümü
                    <Views>
                        <ViewButton $active><FormViewIcon /></ViewButton>
                        <ViewButton><LayoutViewIcon /></ViewButton>
                        <ViewButton><DesignViewIcon /></ViewButton>
                    </Views>
                </StatusBar>
                <TaskBar>
                    <TaskButton />
                    <Clock>12:26</Clock>
                    <DesktopEdge />
                </TaskBar>
            </Window>
        </>
    );
};

export default App;
